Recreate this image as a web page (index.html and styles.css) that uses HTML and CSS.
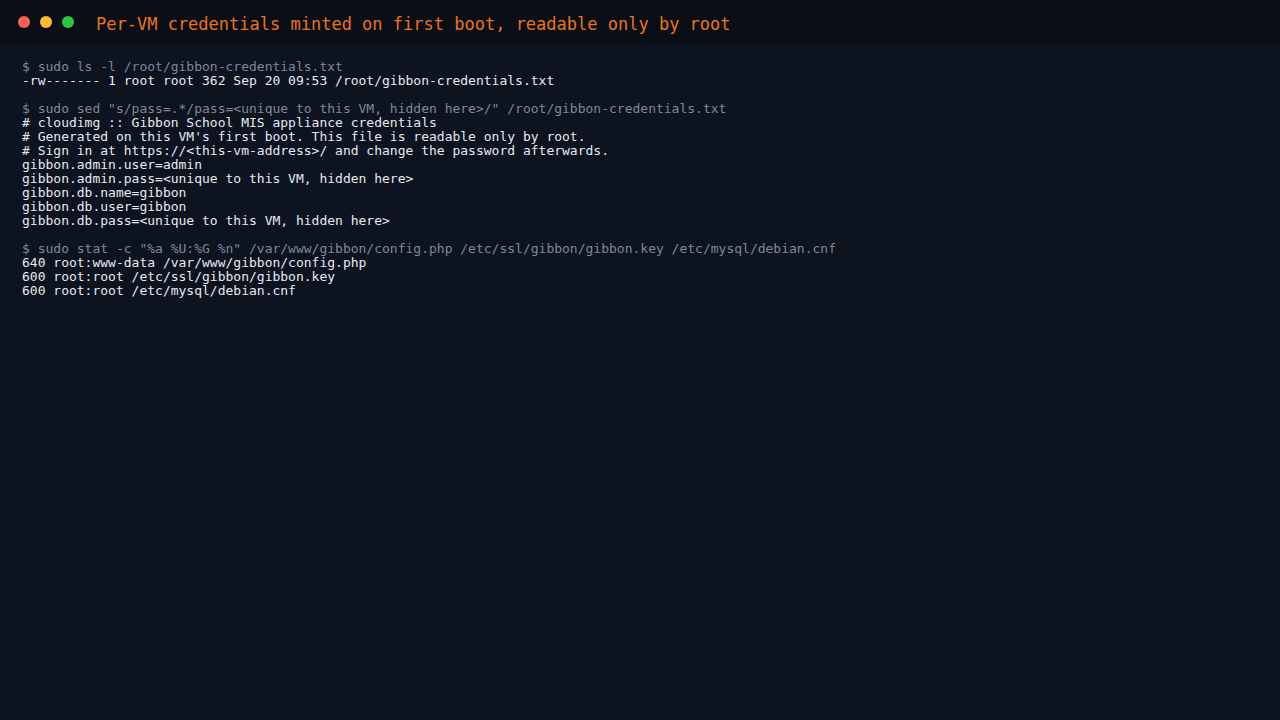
FILE: index.html
```html
<!DOCTYPE html>
<html>
<head>
<meta charset="utf-8">
<link rel="stylesheet" href="styles.css">
</head>
<body>
<div class="term">
  <div class="bar">
    <div class="dots">
      <span class="dot red"></span>
      <span class="dot yellow"></span>
      <span class="dot green"></span>
    </div>
    <div class="title">Per-VM credentials minted on first boot, readable only by root</div>
  </div>
  <div class="body">
    <div class="block">
      <div class="cmd">$ sudo ls -l /root/gibbon-credentials.txt</div>
      <div class="out">-rw------- 1 root root 362 Sep 20 09:53 /root/gibbon-credentials.txt</div>
    </div>
    <div class="block">
      <div class="cmd">$ sudo sed "s/pass=.*/pass=&lt;unique to this VM, hidden here&gt;/" /root/gibbon-credentials.txt</div>
      <div class="out"># cloudimg :: Gibbon School MIS appliance credentials
# Generated on this VM's first boot. This file is readable only by root.
# Sign in at https://&lt;this-vm-address&gt;/ and change the password afterwards.
gibbon.admin.user=admin
gibbon.admin.pass=&lt;unique to this VM, hidden here&gt;
gibbon.db.name=gibbon
gibbon.db.user=gibbon
gibbon.db.pass=&lt;unique to this VM, hidden here&gt;</div>
    </div>
    <div class="block">
      <div class="cmd">$ sudo stat -c "%a %U:%G %n" /var/www/gibbon/config.php /etc/ssl/gibbon/gibbon.key /etc/mysql/debian.cnf</div>
      <div class="out">640 root:www-data /var/www/gibbon/config.php
600 root:root /etc/ssl/gibbon/gibbon.key
600 root:root /etc/mysql/debian.cnf</div>
    </div>
  </div>
</div>
</body>
</html>
```
FILE: styles.css
```css
html, body {
  margin: 0;
  padding: 0;
  background: #0d1420;
  height: 100%;
}
.term {
  display: flex;
  flex-direction: column;
  min-height: 100%;
  font-family: "DejaVu Sans Mono", monospace;
}
.bar {
  height: 44px;
  background: #0a0e17;
  display: flex;
  align-items: center;
  padding-left: 18px;
  box-sizing: border-box;
}
.dots {
  display: flex;
  gap: 10px;
}
.dot {
  width: 12px;
  height: 12px;
  border-radius: 50%;
  display: block;
}
.red { background: #ff5f57; }
.yellow { background: #febc2e; }
.green { background: #28c840; }
.title {
  margin-left: 22px;
  padding-top: 4px;
  color: #ec7318;
  font-size: 17px;
  line-height: 20px;
}
.body {
  padding: 16px 22px;
  display: flex;
  flex-direction: column;
  gap: 14px;
  font-size: 13px;
  line-height: 14px;
}
.cmd {
  color: #7d889c;
  white-space: pre;
}
.out {
  color: #e6e9ef;
  white-space: pre;
}
```
